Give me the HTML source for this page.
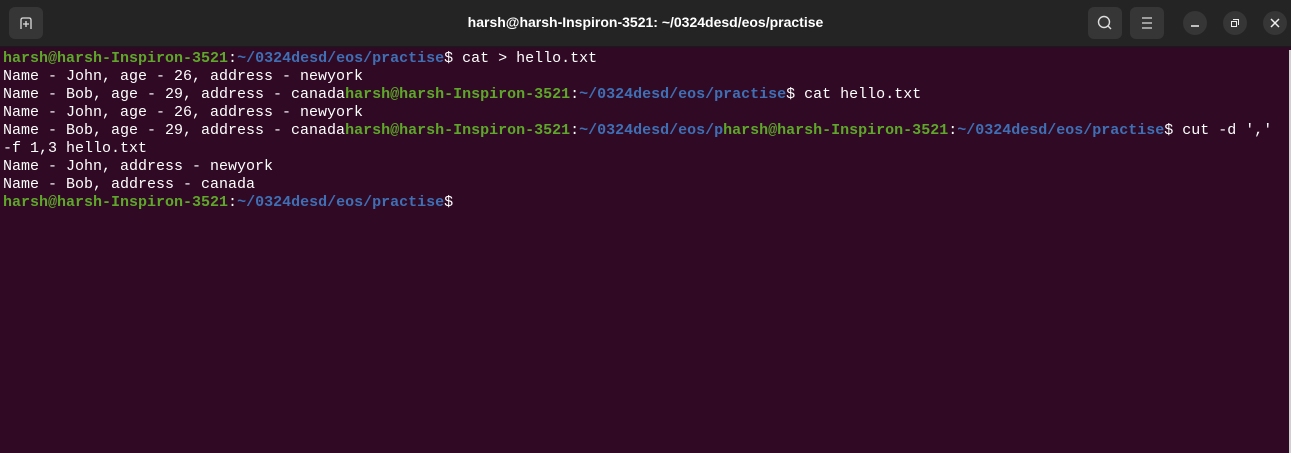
<!DOCTYPE html>
<html><head><style>
body{margin:0;width:1291px;height:453px;overflow:hidden;background:#300a24;font-family:"Liberation Sans",sans-serif}
.hdr{position:absolute;left:0;top:0;width:1291px;height:46px;background:#242424;border-bottom:1px solid #1a1a1a}
.title{position:absolute;left:0;right:0;top:14px;text-align:center;color:#fff;font-weight:bold;font-size:14px}
.btn{position:absolute;top:7px;width:34px;height:32px;background:#363636;border-radius:6px}
.circ{position:absolute;top:11px;width:24px;height:24px;background:#363636;border-radius:50%}
.term{position:absolute;left:3px;top:50px;font-family:"Liberation Mono",monospace;font-size:15px;line-height:18px;color:#fff;white-space:pre}
.g{color:#5ea72a;font-weight:bold}.b{color:#3f6fb5;font-weight:bold}
.sb{position:absolute;left:1289px;top:50px;width:2px;height:403px;background:#d0d0d0}
</style></head><body>
<div class="hdr">
<div class="btn" style="left:9px"><svg width="34" height="32"><path d="M12 22V13q0-2 2-2h6q2 0 2 2v9M17 14v6M14 17h6" stroke="#ddd" stroke-width="1.3" fill="none"/></svg></div>
<div class="title">harsh@harsh-Inspiron-3521: ~/0324desd/eos/practise</div>
<div class="btn" style="left:1088px"><svg width="34" height="32"><circle cx="16" cy="15" r="5.5" stroke="#ddd" stroke-width="1.4" fill="none"/><path d="M20 19l3 3" stroke="#ddd" stroke-width="1.4"/></svg></div>
<div class="btn" style="left:1130px"><svg width="34" height="32"><path d="M12 11h10M12 16h10M12 21h10" stroke="#ddd" stroke-width="1.3"/></svg></div>
<div class="circ" style="left:1183px"><svg width="24" height="24"><path d="M8 15h8" stroke="#eee" stroke-width="1.5"/></svg></div>
<div class="circ" style="left:1223px"><svg width="24" height="24"><rect x="8.5" y="10.5" width="5" height="5" stroke="#eee" fill="none"/><path d="M10.5 9V8.5h5v5H15" stroke="#eee" fill="none"/></svg></div>
<div class="circ" style="left:1263px"><svg width="24" height="24"><path d="M8 8l8 8M16 8l-8 8" stroke="#eee" stroke-width="1.5"/></svg></div>
</div>
<div class="term"><span class="g">harsh@harsh-Inspiron-3521</span>:<span class="b">~/0324desd/eos/practise</span>$ cat &gt; hello.txt
Name - John, age - 26, address - newyork
Name - Bob, age - 29, address - canada<span class="g">harsh@harsh-Inspiron-3521</span>:<span class="b">~/0324desd/eos/practise</span>$ cat hello.txt
Name - John, age - 26, address - newyork
Name - Bob, age - 29, address - canada<span class="g">harsh@harsh-Inspiron-3521</span>:<span class="b">~/0324desd/eos/p</span><span class="g">harsh@harsh-Inspiron-3521</span>:<span class="b">~/0324desd/eos/practise</span>$ cut -d ','
-f 1,3 hello.txt
Name - John, address - newyork
Name - Bob, address - canada
<span class="g">harsh@harsh-Inspiron-3521</span>:<span class="b">~/0324desd/eos/practise</span>$</div>
<div class="sb"></div>
</body></html>
